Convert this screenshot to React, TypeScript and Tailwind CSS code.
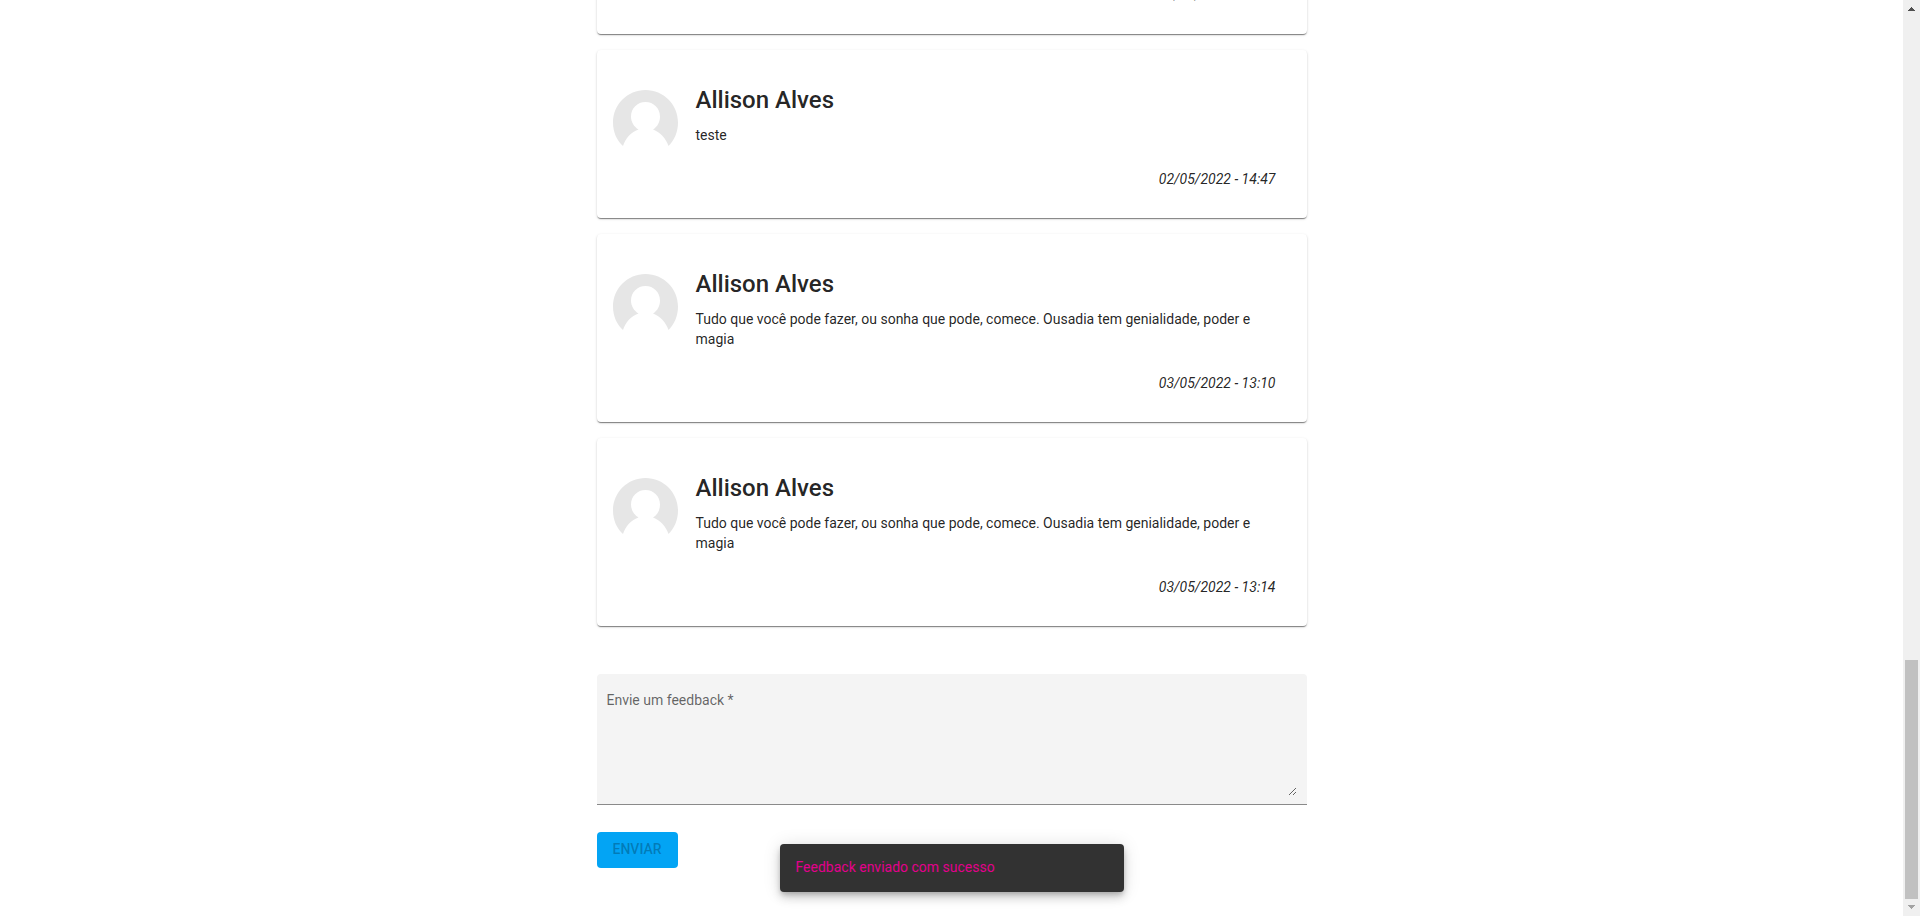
import React from "react";

type Comment = { name?: string; text?: string; date: string };

const comments: Comment[] = [
  { date: "02/05/2022 - 14:46" },
  { name: "Allison Alves", text: "teste", date: "02/05/2022 - 14:47" },
  {
    name: "Allison Alves",
    text: "Tudo que você pode fazer, ou sonha que pode, comece. Ousadia tem genialidade, poder e magia",
    date: "03/05/2022 - 13:10",
  },
  {
    name: "Allison Alves",
    text: "Tudo que você pode fazer, ou sonha que pode, comece. Ousadia tem genialidade, poder e magia",
    date: "03/05/2022 - 13:14",
  },
];

function Avatar() {
  return (
    <svg viewBox="0 0 65 65" className="size-[65px] shrink-0" aria-hidden="true">
      <path
        fill="#e6e6e6"
        d="M10 56C3.700 50.200 0 42 0 32.500C0 14.500 14.500 0 32.500 0S65 14.500 65 32.500C65 42 61.300 50.200 55.500 56C53 48.500 47.500 42.500 40 39.500C44.500 36.800 47 32 47 26.500C47 18.300 40.700 12 32.500 12S18 18.300 18 26.500C18 32 21 36.800 25.500 39.500C17.500 42.500 12.500 48.500 10 56Z"
      />
    </svg>
  );
}

function CommentCard({ name, text, date }: Comment) {
  return (
    <article className="rounded bg-white px-4 pt-10 pb-[29px] shadow-[0_2px_1px_-1px_rgba(0,0,0,0.3),0_1px_1px_0_rgba(0,0,0,0.2),0_1px_3px_0_rgba(0,0,0,0.14)]">
      {name && (
        <div className="flex gap-[18px]">
          <Avatar />
          <div className="min-w-0 flex-1 pr-8 pb-6">
            <h2 className="pt-0.5 pb-[17px] text-2xl leading-4 font-medium">{name}</h2>
            <p>{text}</p>
          </div>
        </div>
      )}
      <p className="pr-[15px] text-right italic">{date}</p>
    </article>
  );
}

function Scrollbar() {
  return (
    <div className="flex w-[17px] shrink-0 flex-col items-center bg-[#f0f0f0]" aria-hidden="true">
      <svg viewBox="0 0 17 17" className="size-[17px]" shapeRendering="crispEdges">
        <path fill="#505050" d="M8 7h1v1h1v1h1v1h1v1H5v-1h1V9h1V8h1z" />
      </svg>
      <div className="flex w-[13px] flex-1 flex-col">
        <div className="flex-[643]" />
        <div className="flex-[239] bg-[#c1c1c1]" />
      </div>
      <svg viewBox="0 0 17 17" className="size-[17px]" shapeRendering="crispEdges">
        <path fill="#a3a3a3" d="M5 6h7v1h-1v1h-1v1H9v1H8V9H7V8H6V7H5z" />
      </svg>
    </div>
  );
}

export default function App() {
  return (
    <div className="flex h-screen overflow-hidden bg-white font-[Roboto,sans-serif] text-sm leading-5 text-black/87">
      <main className="relative flex min-w-0 flex-1 flex-col items-center justify-end overflow-hidden pb-12">
        <div className="flex w-full max-w-[710px] flex-col gap-4">
          {comments.map((c) => (
            <CommentCard key={c.date} {...c} />
          ))}
        </div>
        <form className="mt-12 w-full max-w-[710px]">
          <div className="relative rounded-t border-b border-[#8a8a8a] bg-[#f4f4f4] px-2.5 pt-6 pb-2">
            <label htmlFor="feedback" className="absolute top-4 left-2.5 text-black/60">
              Envie um feedback *
            </label>
            <textarea id="feedback" className="block h-[98px] w-full resize-y bg-transparent outline-none" />
          </div>
          <button
            type="button"
            disabled
            className="mt-[27px] flex h-9 items-center rounded bg-[#03a4f4] px-4 pb-0.5 font-medium text-black/26"
          >
            ENVIAR
          </button>
        </form>
        <div
          role="status"
          className="absolute bottom-6 left-1/2 w-[344px] -translate-x-1/2 rounded bg-[#323232] px-4 pt-[13px] pb-[15px] text-[#e3008c] shadow-[0_3px_5px_-1px_rgba(0,0,0,0.2),0_6px_10px_0_rgba(0,0,0,0.14),0_1px_18px_0_rgba(0,0,0,0.12)]"
        >
          Feedback enviado com sucesso
        </div>
      </main>
      <Scrollbar />
    </div>
  );
}
